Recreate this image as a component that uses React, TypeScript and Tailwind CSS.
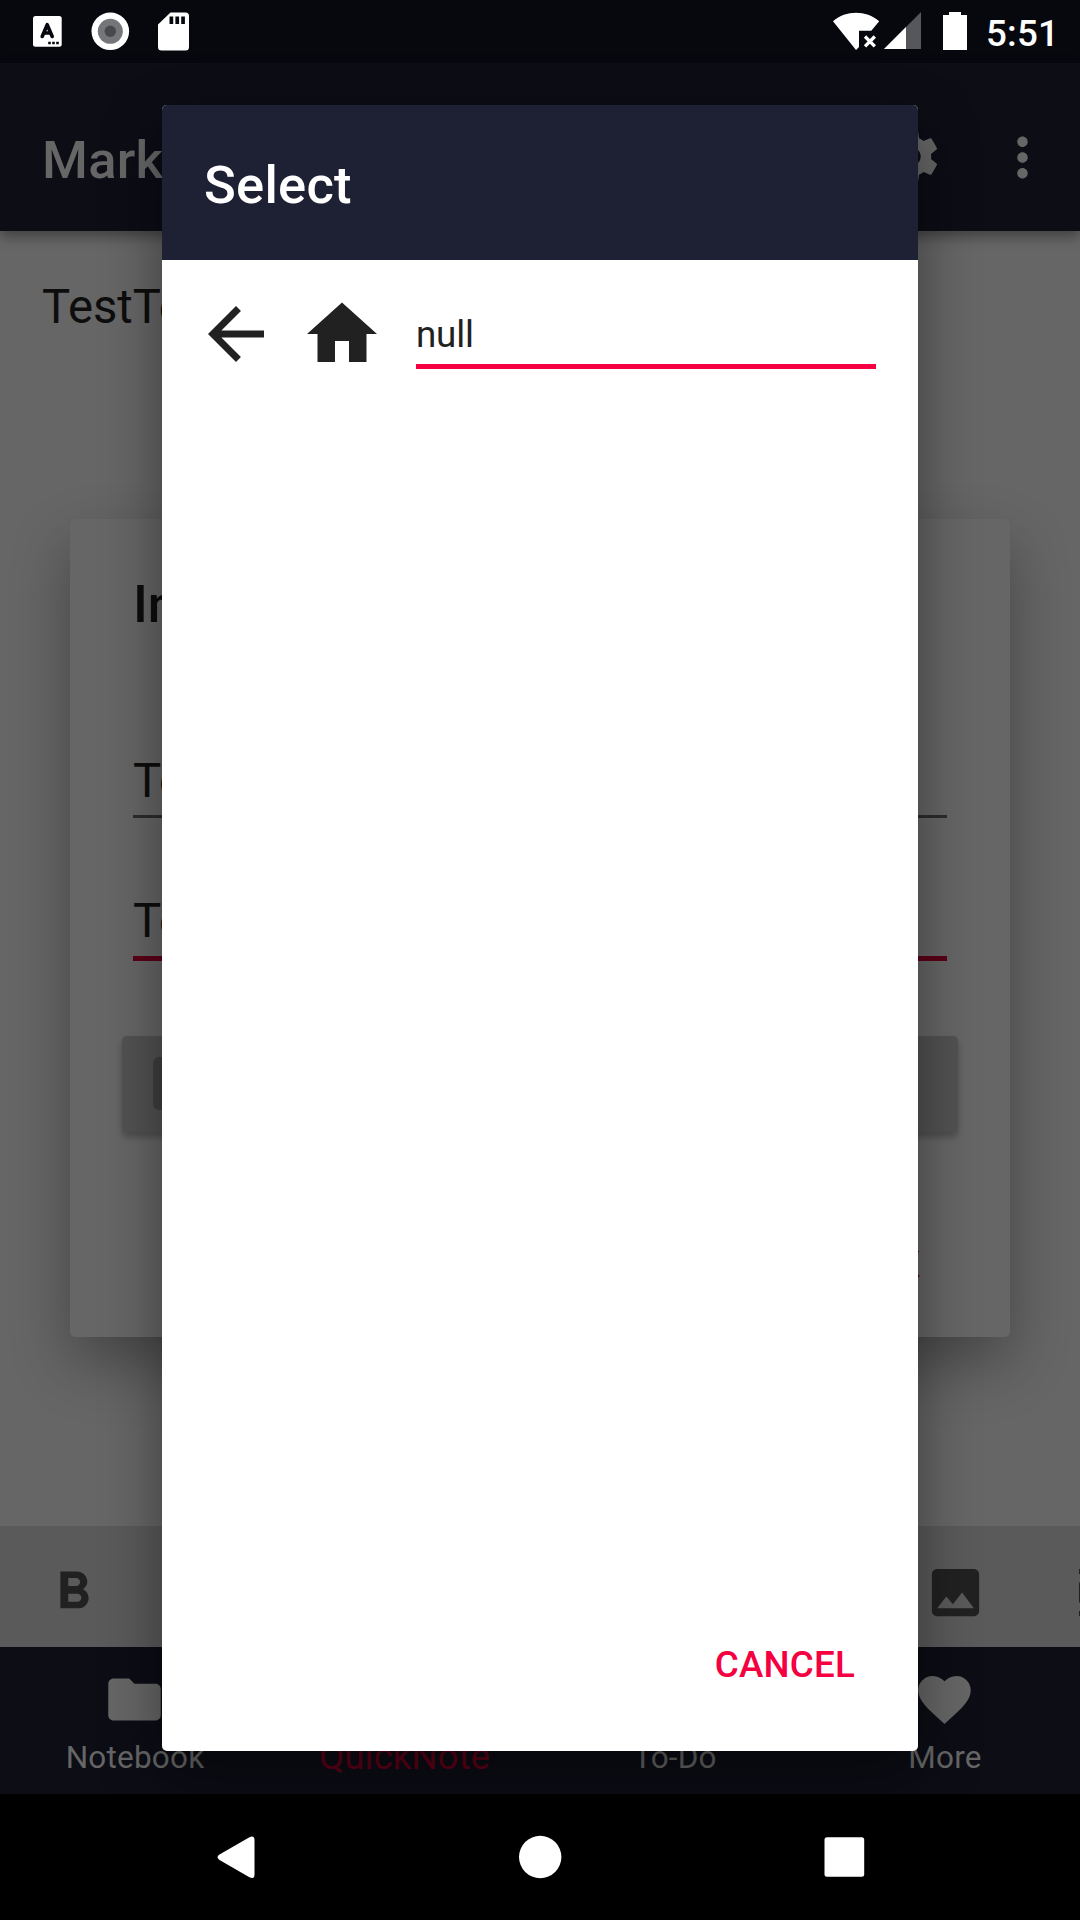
import React from "react";

function Icon({ d, className, viewBox = "0 0 24 24" }: { d: string; className: string; viewBox?: string }) {
  return (
    <svg viewBox={viewBox} className={className} fill="currentColor">
      <path fillRule="evenodd" d={d} />
    </svg>
  );
}

const paths = {
  back: "M20 11H7.83l5.59-5.59L12 4l-8 8 8 8 1.41-1.41L7.83 13H20v-2z",
  home: "M10 20v-6h4v6h5v-8h3L12 3 2 12h3v8z",
  settings:
    "M19.43 12.98c.04-.32.07-.64.07-.98s-.03-.66-.07-.98l2.11-1.65c.19-.15.24-.42.12-.64l-2-3.46c-.12-.22-.39-.3-.61-.22l-2.49 1c-.52-.4-1.08-.73-1.69-.98l-.38-2.65C14.46 2.18 14.25 2 14 2h-4c-.25 0-.46.18-.49.42l-.38 2.65c-.61.25-1.17.59-1.69.98l-2.49-1c-.23-.09-.49 0-.61.22l-2 3.46c-.13.22-.07.49.12.64l2.11 1.65c-.04.32-.07.65-.07.98s.03.66.07.98l-2.11 1.65c-.19.15-.24.42-.12.64l2 3.46c.12.22.39.3.61.22l2.49-1c.52.4 1.08.73 1.69.98l.38 2.65c.03.24.24.42.49.42h4c.25 0 .46-.18.49-.42l.38-2.65c.61-.25 1.17-.59 1.69-.98l2.49 1c.23.09.49 0 .61-.22l2-3.46c.12-.22.07-.49-.12-.64l-2.11-1.65zM12 15.5c-1.93 0-3.5-1.57-3.500-3.500s1.570-3.500 3.500-3.500 3.500 1.570 3.500 3.500-1.570 3.500-3.500 3.500z",
  more: "M12 8c1.1 0 2-.9 2-2s-.9-2-2-2-2 .9-2 2 .9 2 2 2zm0 2c-1.1 0-2 .9-2 2s.9 2 2 2 2-.9 2-2-.9-2-2-2zm0 6c-1.1 0-2 .9-2 2s.9 2 2 2 2-.9 2-2-.9-2-2-2z",
  bold: "M15.6 10.79c.97-.67 1.65-1.77 1.65-2.79 0-2.26-1.75-4-4-4H7v14h7.04c2.09 0 3.71-1.7 3.71-3.79 0-1.52-.86-2.82-2.15-3.42zM10 6.5h3c.83 0 1.5.67 1.5 1.5s-.67 1.5-1.5 1.5h-3v-3zm3.500 9H10v-3h3.500c.83 0 1.500.67 1.500 1.500s-.67 1.500-1.500 1.500z",
  image: "M21 19V5c0-1.1-.9-2-2-2H5c-1.1 0-2 .9-2 2v14c0 1.1.9 2 2 2h14c1.1 0 2-.9 2-2zM8.5 13.5l2.5 3.01L14.5 12l4.5 6H5l3.5-4.5z",
  folder: "M10 4H4c-1.1 0-1.99.9-1.99 2L2 18c0 1.1.9 2 2 2h16c1.1 0 2-.9 2-2V8c0-1.1-.9-2-2-2h-8l-2-2z",
  heart:
    "M12 21.35l-1.45-1.32C5.4 15.36 2 12.28 2 8.5 2 5.42 4.42 3 7.5 3c1.74 0 3.41.81 4.5 2.09C13.09 3.81 14.76 3 16.5 3 19.58 3 22 5.42 22 8.5c0 3.78-3.4 6.86-8.55 11.54L12 21.35z",
};

function StatusBar() {
  return (
    <div className="flex h-[63px] shrink-0 items-start bg-[#07080d] text-white">
      <svg className="h-[63px] w-[220px]" viewBox="0 0 220 63">
        <rect x="33" y="16" width="28.7" height="30.7" rx="2.5" fill="#fff" />
        <path d="M42.2 36.5l5-11.8 5 11.8M43.8 33h6.8" fill="none" stroke="#07080d" strokeWidth="3.6" strokeLinecap="round" strokeLinejoin="round" />
        <path d="M48.2 43h2.6M52.2 43h2.6M56.2 43h2.6" stroke="#07080d" strokeWidth="2.6" />
        <circle cx="110.3" cy="31.3" r="18.8" fill="#fff" />
        <circle cx="110.3" cy="31.3" r="12.5" fill="#747679" />
        <circle cx="110.3" cy="31.3" r="5.7" fill="#47494c" />
        <path d="M170.5 12.5H185.5a3.5 3.5 0 0 1 3.5 3.5V47a3.5 3.5 0 0 1-3.5 3.5H161.5a3.5 3.5 0 0 1-3.5-3.5V24.5z" fill="#fff" />
        <path d="M169.5 16.5h3.7v7.5h-3.7zM175.4 16.5h3.7v7.5h-3.7zM181.2 16.5h3.7v7.5h-3.7z" fill="#07080d" />
      </svg>
      <svg className="ml-auto h-[63px] w-[160px]" viewBox="820 0 160 63">
        <path d="M833 21.3C846 10 866 10 879.2 21.3L871.3 30.8H859V47L856 50z" fill="#fff" />
        <path d="M865 36.5l9.8 9.8M874.8 36.5l-9.800 9.800" stroke="#fff" strokeWidth="3.3" />
        <path d="M884 49L921 12V49z" fill="#56575b" />
        <path d="M884 49L906 27V49z" fill="#fff" />
        <path d="M949 12h12v3h6v35h-24V15h6z" fill="#fff" />
      </svg>
      <span className="w-[100px] pt-[12px] pl-[6px] text-[36.75px] leading-[43px] font-medium tracking-[0.2px]">5:51</span>
    </div>
  );
}

function NavItem({ label, icon, active }: { label: string; icon?: string; active?: boolean }) {
  return (
    <div className="flex flex-1 flex-col items-center pt-[21px]">
      <div className="mr-[1px] h-[63px] w-[63px]">{icon && <Icon d={icon} className="size-[63px]" />}</div>
      {active ? (
        <span className="mt-[4px] mr-[1px] text-[36.75px] leading-[43px] text-[#610018]">{label}</span>
      ) : (
        <span className="mt-[8px] text-[31.5px] leading-[37px] tracking-[0.2px]">{label}</span>
      )}
    </div>
  );
}

function Screen() {
  return (
    <div className="flex h-full flex-col">
      <StatusBar />
      <header className="z-10 flex h-[168px] shrink-0 items-start bg-[#0c0d15] pl-[42px] text-[#666] shadow-[0_6px_12px_rgba(0,0,0,0.35)]">
        <h1 className="mt-[66px] text-[52.5px] leading-[62px] font-medium tracking-[0.25px]">Markor</h1>
        <Icon d={paths.settings} className="mt-[62px] ml-auto size-[63px]" />
        <Icon d={paths.more} className="mt-[63px] mr-[26px] ml-[48px] size-[63px]" />
      </header>
      <main className="flex-1 bg-[#666] pt-[48px] pl-[42px] text-[47.25px] leading-[56px] text-[#0d0d0d]">TestTest</main>
      <div className="flex h-[121px] shrink-0 justify-between overflow-hidden bg-[#5a5a5a] pt-[35px] pl-[42px] text-[#212121]">
        <Icon d={paths.bold} className="size-[63px]" />
        <div className="flex w-[156px] shrink-0 justify-between">
          <Icon d={paths.image} className="size-[63px]" />
          <svg viewBox="0 0 2 63" className="h-[63px] w-[2px]" fill="currentColor">
            <path d="M1 8H2v5H1zM1 21.500H2v20H1zM1 50H2v5H1z" />
          </svg>
        </div>
      </div>
      <nav className="flex h-[147px] shrink-0 bg-[#0c0d15] text-[#666]">
        <NavItem label="Notebook" icon={paths.folder} />
        <NavItem label="QuickNote" active />
        <NavItem label="To-Do" />
        <NavItem label="More" icon={paths.heart} />
      </nav>
      <footer className="relative z-30 h-[126px] shrink-0 bg-black text-white">
        <svg className="h-[126px] w-full" viewBox="0 0 1080 126" fill="currentColor">
          <path d="M219.5 60.5L249 43.5Q254.5 40.5 254.5 46V80.5Q254.5 86 249 83L219.5 66Q215.5 63.2 219.5 60.5z" />
          <circle cx="540.2" cy="63" r="21.2" />
          <rect x="824.5" y="43.2" width="39.7" height="39.6" rx="2.5" />
        </svg>
      </footer>
    </div>
  );
}

function InsertDialog() {
  return (
    <section className="absolute top-[519px] left-[70px] flex h-[818px] w-[940px] flex-col rounded-[5px] bg-[#666] px-[63px] pt-[54px] text-[#0d0d0d] shadow-[0_26px_60px_rgba(0,0,0,0.32)]">
      <h2 className="text-[52.5px] leading-[62px] font-medium">Insert</h2>
      <div className="mt-[118px] h-[65px] border-b-[3px] border-[#2c2c2c] text-[47.25px] leading-[56px]">Test</div>
      <div className="mt-[75px] h-[68px] border-b-[5px] border-[#5b0017] text-[47.25px] leading-[56px]">Test</div>
      <div className="mx-[-11px] mt-[75px] h-[96px] shrink-0 rounded-[5px] bg-[#525252] pt-[21px] pl-[31px] shadow-[0_5px_6px_rgba(0,0,0,0.25)]">
        <div className="h-[53px] w-[90px] rounded-[6px] bg-[#3f3f3f]" />
      </div>
      <div className="mt-[111px] mr-[27px] text-right text-[36.75px] leading-[43px] font-medium text-[#610018]">OK</div>
    </section>
  );
}

function SelectDialog() {
  return (
    <section className="absolute top-[105px] left-[162px] z-20 flex h-[1646px] w-[756px] flex-col overflow-hidden rounded-[5px] bg-white">
      <header className="flex h-[155px] shrink-0 items-start bg-[#1e2034] pt-[49px] pl-[42px]">
        <h2 className="text-[52.5px] leading-[62px] font-medium tracking-[0.25px] text-white">Select</h2>
      </header>
      <div className="flex items-start pt-[32px] pr-[42px] pl-[32px] text-[#212121]">
        <Icon d={paths.back} className="size-[84px]" />
        <Icon d={paths.home} className="ml-[22px] size-[84px]" />
        <div className="mt-[21px] ml-[32px] h-[56px] flex-1 border-b-[5px] border-[#f50040] text-[36.75px] leading-[43px] tracking-[-0.2px]">null</div>
      </div>
      <button className="mt-auto mr-[63px] mb-[65px] self-end text-[36.75px] leading-[43px] font-medium tracking-[0.2px] text-[#f50040]">CANCEL</button>
    </section>
  );
}

export default function App() {
  return (
    <div className="relative h-[1920px] w-[1080px] overflow-hidden bg-black font-['Roboto',sans-serif]">
      <Screen />
      <InsertDialog />
      <div className="absolute top-[105px] left-[162px] z-10 h-[1646px] w-[756px] rounded-[5px] shadow-[0_24px_60px_rgba(0,0,0,0.42)]" />
      <SelectDialog />
    </div>
  );
}
